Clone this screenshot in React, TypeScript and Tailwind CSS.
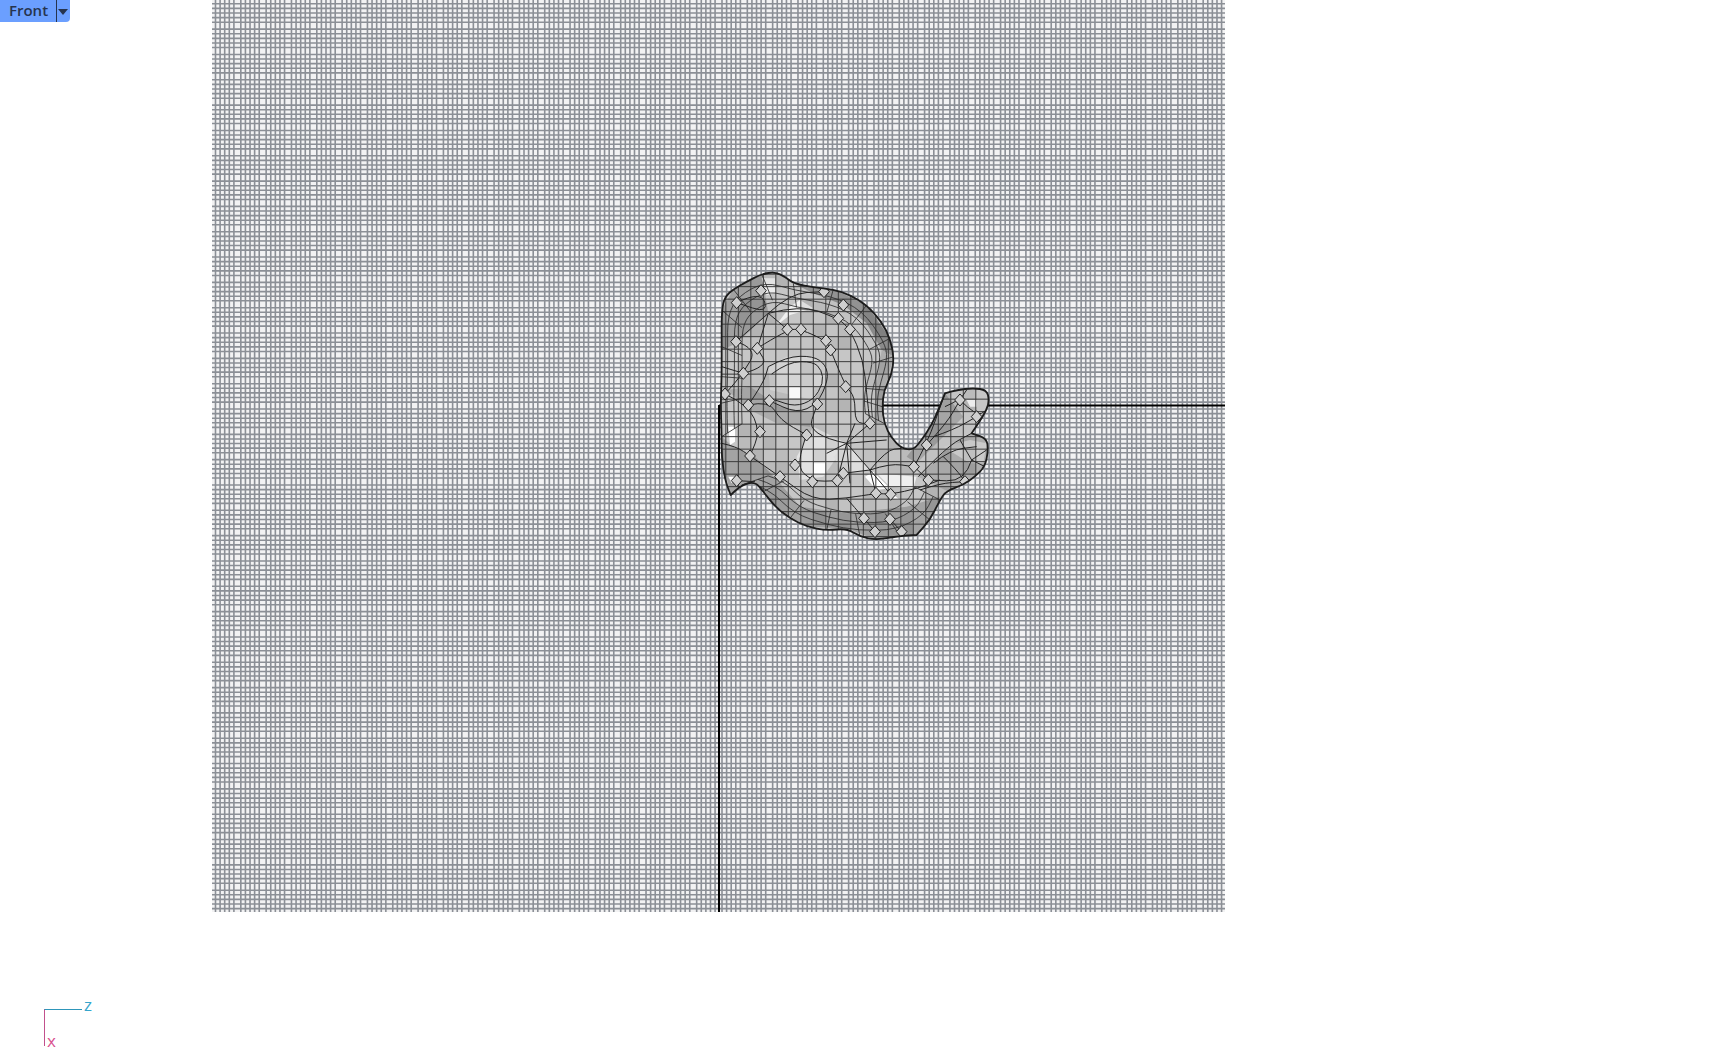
const MAJOR = 1013 / 40;
const OFFSETS = [3.5, 8.1, 12.7, 17.3, 21.9];

// grid line positions, one band of five dark lines per major cell
const gridX: number[] = [];
const gridY: number[] = [];
for (let i = 0; i < 40; i++) {
  for (const o of OFFSETS) {
    gridX.push(212 + i * MAJOR + o);
    gridY.push(405.5 - 16 * MAJOR + i * MAJOR + o);
  }
}

type Pt = [number, number];

const parse = (s: string): Pt[] =>
  s.split(" ").map((p) => {
    const [x, y] = p.split(",").map(Number);
    return [x, y] as Pt;
  });

// round a polyline off by running quadratics through the segment midpoints
// (a repeated point stays a sharp corner)
function smooth(pts: Pt[], closed = false) {
  if (pts.length < 3) return `M${pts.map((p) => p.join(" ")).join("L")}`;
  const mid = (a: Pt, b: Pt) => `${(a[0] + b[0]) / 2} ${(a[1] + b[1]) / 2}`;
  if (closed) {
    let d = `M${mid(pts[pts.length - 1], pts[0])}`;
    pts.forEach((p, i) => {
      d += `Q${p[0]} ${p[1]} ${mid(p, pts[(i + 1) % pts.length])}`;
    });
    return d + "Z";
  }
  let d = `M${pts[0][0]} ${pts[0][1]}`;
  for (let i = 1; i < pts.length - 1; i++) {
    d += `Q${pts[i][0]} ${pts[i][1]} ${mid(pts[i], pts[i + 1])}`;
  }
  return d + `L${pts[pts.length - 1][0]} ${pts[pts.length - 1][1]}`;
}

const scaled = (pts: Pt[], c: Pt, k: number): Pt[] =>
  pts.map(([x, y]) => [c[0] + (x - c[0]) * k, c[1] + (y - c[1]) * k]);

const OUTLINE = parse(
  "65,180 75,140 100,118 140,95 185,72 225,66 255,80 280,100 340,112 400,118 450,135 500,165 545,215 570,265 582,320 575,375 552,420 547,470 552,520 575,565 605,595 640,600 665,570 695,525 715,480 735,430 735,430 770,420 820,414 860,420 868,450 860,480 835,520 815,550 815,550 860,565 865,600 855,650 825,680 790,705 740,722 720,750 690,810 650,855 650,855 600,858 530,870 480,860 440,835 380,842 320,830 270,805 225,770 190,725 165,695 125,705 92,735 92,735 75,690 65,620 65,560 62,460 65,380 65,290",
);
const OUTLINE_D = smooth(OUTLINE, true);

const HEAD_ARC = parse(
  "65,560 62,460 65,380 65,290 65,180 100,118 185,72 280,100 400,118 500,165 570,265 582,320 552,420 547,470 552,520",
);
const BOTTOM_ARC = parse("125,705 190,725 270,805 380,842 480,860 600,858 690,810 720,750");
const HEAD_C: Pt = [320, 400];
const BOTTOM_C: Pt = [430, 600];

const SHADES: [string, string][] = [
  ["#9a9a9a", "65,180 100,118 185,72 205,190 110,280 65,300"],
  ["#8a8a8a", "280,100 400,118 500,165 570,265 582,320 545,300 500,220 430,165 340,130"],
  ["#a8a8a8", "582,320 552,420 547,520 520,520 530,400 545,300"],
  ["#9c9c9c", "65,560 100,590 165,620 240,700 300,770 440,790 620,770 720,740 690,810 650,855 530,870 440,835 320,830 225,770 165,695 92,735 65,620"],
  ["#a5a5a5", "80,420 150,410 240,470 340,490 330,530 230,520 150,480"],
  ["#a0a0a0", "735,430 790,500 720,570 650,640 620,620 695,525"],
  ["#a8a8a8", "655,680 740,600 815,550 860,565 865,600 855,650 790,705 740,722"],
  ["#c8c8c8", "730,590 810,570 860,580 850,640 810,640"],
  ["#d2d2d2", "205,350 260,320 340,318 380,350 380,400 340,450 210,420"],
  ["#e0e0e0", "340,530 440,580 370,680 300,690 290,620"],
  ["#dcdcdc", "440,580 510,660 430,670 400,620"],
  ["#ffffff", "340,640 375,640 375,675 340,675"],
  ["#f8f8f8", "268,412 300,412 300,445 268,445"],
  ["#eeeeee", "530,670 650,680 640,715 570,710"],
  ["#ffffff", "495,680 520,665 570,715 530,720"],
  ["#f0f0f0", "225,230 270,195 340,175 300,150 270,170"],
  ["#ececec", "185,85 225,85 225,130 200,135"],
  ["#ffffff", "85,530 105,530 105,575 90,585"],
  ["#ffffff", "85,680 105,680 95,700"],
  ["#ffffff", "100,270 112,265 118,285 106,290"],
  ["#ffffff", "800,450 830,450 830,470 810,470"],
  ["#ffffff", "575,730 600,750 570,745 560,725"],
];

const DIAMONDS = [
  [183, 122], [110, 158], [262, 238], [303, 238], [172, 295], [130, 370], [108, 275], [75, 432],
  [145, 465], [208, 452], [352, 462], [437, 410], [392, 300], [378, 272], [415, 205], [450, 238],
  [510, 520], [320, 555], [285, 645], [337, 695], [412, 692], [430, 670], [528, 730], [572, 733],
  [492, 805], [570, 808], [150, 618], [110, 692], [180, 545], [680, 585], [642, 650], [780, 450],
  [830, 500], [525, 845], [605, 845], [795, 695], [685, 690], [372, 125], [430, 165], [240, 680],
];

const CURVES = [
  // head rings
  "172,295 262,238 303,238 378,272 392,300 437,410 465,440 465,520 510,520",
  "205,350 260,320 340,318 378,345 385,390 352,462 290,490 208,452",
  "215,372 265,335 340,335 365,360 370,400 340,450 285,470 225,450",
  "130,370 205,350 172,295",
  "145,465 190,400 205,350",
  "110,158 183,122 205,190 110,158",
  "205,190 262,238",
  "205,190 172,295",
  "205,190 108,275",
  "205,190 270,130 372,125",
  "205,190 300,165 415,205 450,238 490,330 500,430 510,520",
  "108,275 172,295 130,370 75,432",
  "75,432 145,465 180,545 150,618",
  "65,350 130,370",
  "145,465 208,452 240,510 320,555",
  // lower body, radial stars
  "440,580 320,555 352,462",
  "440,580 465,520",
  "440,580 510,520",
  "440,580 560,570",
  "440,580 380,610",
  "440,580 412,692",
  "440,580 510,660",
  "440,580 450,700",
  "320,555 285,645 337,695 412,692",
  "510,660 570,640 640,650",
  "510,660 430,670",
  "510,660 528,730",
  "510,660 572,733",
  "510,660 560,600 605,595",
  "150,618 240,680 337,750 440,745 528,730 572,733 655,715 720,690",
  "65,580 110,590 150,618",
  "165,695 110,692",
  "440,745 492,805 525,845",
  "570,808 605,845",
  // fingers
  "642,650 680,585 735,430",
  "680,585 740,520 780,450",
  "655,680 740,590 815,550",
  "780,450 830,500 860,480",
  "735,470 780,450 800,420",
  "700,560 760,540 830,500",
  "815,630 860,600",
  "815,630 780,570",
  "815,630 855,650",
  "815,630 795,695 685,690",
  "685,690 642,650",
  "730,620 770,660 795,695",
  "660,720 720,700 795,695",
  "700,640 750,600 830,590",
].map((s) => smooth(parse(s)));

// parallel bands that follow the edge, plus the short ribs between them
const BANDS = [
  ...[0.93, 0.85, 0.76].map((k) => smooth(scaled(HEAD_ARC, HEAD_C, k))),
  ...[0.93, 0.84, 0.74].map((k) => smooth(scaled(BOTTOM_ARC, BOTTOM_C, k))),
];
const ribs = (pts: Pt[], c: Pt, k: number) =>
  pts.map(([x, y]) => {
    const [ix, iy] = scaled([[x, y]], c, k)[0];
    return `M${x} ${y}L${ix} ${iy}`;
  });
const RIBS = [...ribs(HEAD_ARC, HEAD_C, 0.76), ...ribs(BOTTOM_ARC, BOTTOM_C, 0.74)];

const columns = Array.from({ length: 24 }, (_, i) => 265 + (i - 7) * 37.5);
const rows = Array.from({ length: 26 }, (_, i) => 485 + (i - 13) * 37.5);

// small per-facet brightness change so the body doesn't read as flat patches
const facet = (i: number, j: number) => ((i * 7 + j * 13 + i * j) % 5) - 2;

function Viewport() {
  return (
    <svg viewBox="212 0 1013 912" className="block h-[912px] w-[1013px] bg-[#f2f2f3]">
      {gridX.map((x) => (
        <line key={x} x1={x} x2={x} y1={0} y2={912} stroke="#8b8f96" strokeWidth={1.6} />
      ))}
      {gridY.map((y) => (
        <line key={y} x1={212} x2={1225} y1={y} y2={y} stroke="#8b8f96" strokeWidth={1.6} />
      ))}
      <line x1={719} x2={719} y1={405} y2={912} stroke="#000" strokeWidth={2} />
      <line x1={719} x2={1225} y1={405.5} y2={405.5} stroke="#000" strokeWidth={2} />
      <g transform="translate(700 250) scale(0.3333)">
        <clipPath id="body">
          <path d={OUTLINE_D} />
        </clipPath>
        <path d={OUTLINE_D} fill="#c2c2c2" />
        <g clipPath="url(#body)">
          {SHADES.map(([fill, pts]) => (
            <polygon key={pts} points={pts} fill={fill} />
          ))}
          {columns.map((x, i) =>
            rows.map((y, j) => (
              <rect
                key={`${i}-${j}`}
                x={x}
                y={y}
                width={37.5}
                height={37.5}
                fill={facet(i, j) < 0 ? "#000" : "#fff"}
                fillOpacity={Math.abs(facet(i, j)) * 0.035}
              />
            )),
          )}
          {columns.map((x) => (
            <line key={x} x1={x} x2={x} y1={0} y2={960} stroke="#3a3a3a" strokeWidth={3} />
          ))}
          {rows.map((y) => (
            <line key={y} x1={0} x2={960} y1={y} y2={y} stroke="#3a3a3a" strokeWidth={3} />
          ))}
          {RIBS.map((d) => (
            <path key={d} d={d} fill="none" stroke="#2a2a2a" strokeWidth={2.5} />
          ))}
          {BANDS.map((d) => (
            <path key={d} d={d} fill="none" stroke="#2a2a2a" strokeWidth={2.5} />
          ))}
          {CURVES.map((d) => (
            <path key={d} d={d} fill="none" stroke="#222" strokeWidth={3} strokeLinejoin="round" />
          ))}
          {DIAMONDS.map(([x, y]) => (
            <polygon
              key={`${x}-${y}`}
              points={`${x},${y - 18} ${x + 16},${y} ${x},${y + 18} ${x - 16},${y}`}
              fill="#cfcfcf"
              stroke="#222"
              strokeWidth={3}
            />
          ))}
        </g>
        <path d={OUTLINE_D} fill="none" stroke="#1c1c1c" strokeWidth={5.5} strokeLinejoin="round" />
      </g>
    </svg>
  );
}

function ViewTab() {
  return (
    <div className="absolute left-0 top-0 flex h-[22px] w-[70px] items-center rounded-br-[4px] bg-[#6b9fff] font-['Open_Sans',sans-serif] text-[15px] font-semibold text-[#26344f]">
      <span className="ml-[9px] w-[47px] pb-[2px] leading-none">Front</span>
      <span className="flex h-full items-center border-l border-[#26344f] pl-px pt-px">
        <svg width="10" height="6" viewBox="0 0 10 6">
          <path d="M0 0h10L5 6z" fill="#26344f" />
        </svg>
      </span>
    </div>
  );
}

function AxisIcon() {
  return (
    <div className="absolute bottom-[7px] left-[44px] flex items-start font-['Open_Sans',sans-serif] text-[17px] leading-none">
      <div className="flex h-[37px] w-[38px] items-end border-l border-t border-l-[#c2508c] border-t-[#2e96ba] pl-[2px] text-[#d84f8e]">
        <span className="-mb-[3px]">x</span>
      </div>
      <span className="-mt-[13px] ml-[2px] text-[#35a5cc]">z</span>
    </div>
  );
}

export default function App() {
  return (
    <div className="relative h-[1053px] w-[1711px] overflow-hidden bg-white">
      <div className="pl-[212px]">
        <Viewport />
      </div>
      <ViewTab />
      <AxisIcon />
    </div>
  );
}
